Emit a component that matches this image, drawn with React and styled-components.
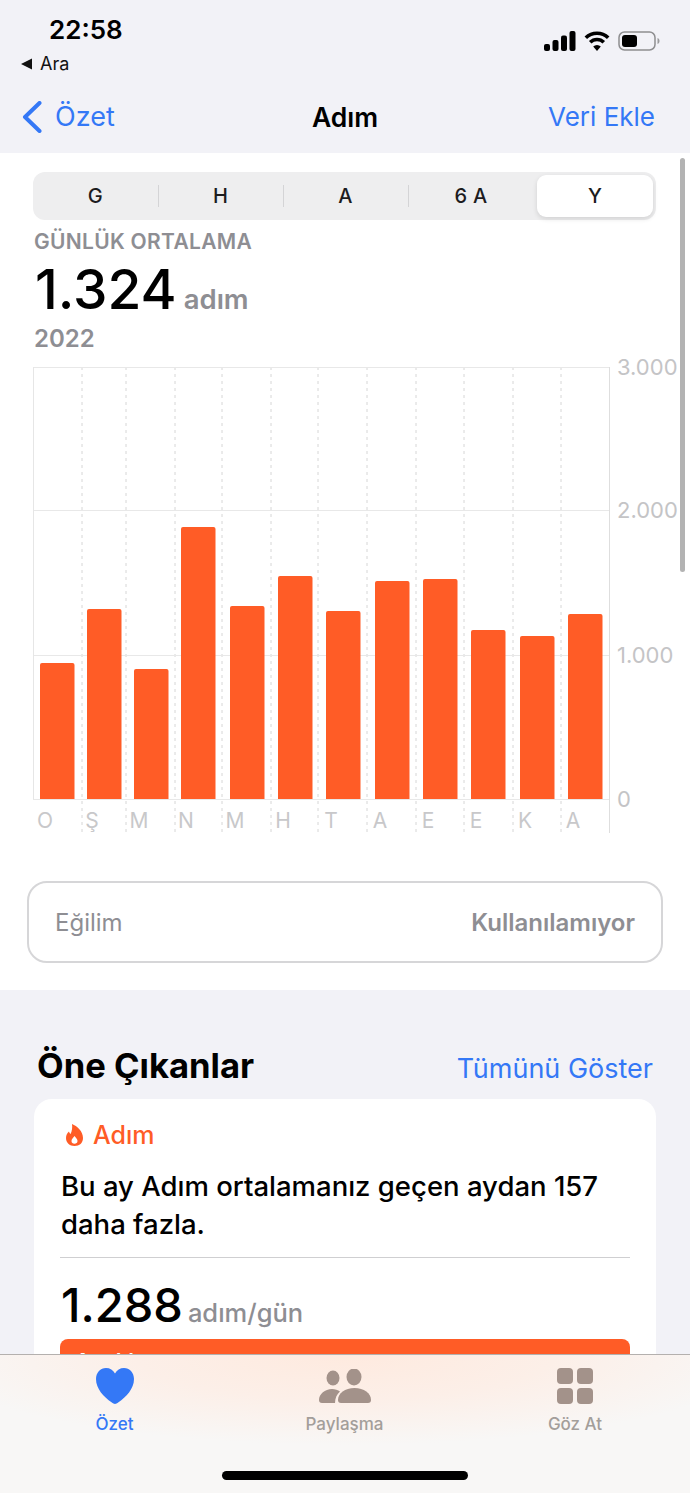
import React from 'react';
import styled, { createGlobalStyle } from 'styled-components';

const GlobalStyle = createGlobalStyle`
  html, body {
    margin: 0;
    padding: 0;
    background: #f2f2f7;
  }
  * {
    box-sizing: border-box;
  }
  body {
    font-family: Inter, "Noto Sans", "Liberation Sans", sans-serif;
  }
`;

const Screen = styled.div`
  position: relative;
  width: 690px;
  height: 1493px;
  overflow: hidden;
  background: #f2f2f7;
`;

const Header = styled.header`
  height: 153px;
  display: flex;
  flex-direction: column;
`;

const StatusBar = styled.div`
  height: 80px;
  display: flex;
  justify-content: space-between;
  align-items: flex-start;
  padding: 14px 30px 0 20px;
`;

const StatusLeft = styled.div`
  display: flex;
  flex-direction: column;
  gap: 9px;
`;

const Clock = styled.div`
  padding-left: 29px;
  font-size: 26px;
  line-height: 31px;
  font-weight: 600;
  color: #000;
`;

const BackApp = styled.div`
  display: flex;
  align-items: center;
  gap: 7px;
  font-size: 18px;
  line-height: 20px;
  color: #111;
`;

const StatusIcons = styled.div`
  display: flex;
  align-items: center;
  gap: 8px;
  margin-top: 17px;
`;

const NavBar = styled.nav`
  flex: 1;
  display: grid;
  grid-template-columns: 1fr auto 1fr;
  align-items: center;
  padding: 0 35px;
  font-size: 26px;
`;

const NavBack = styled.div`
  display: flex;
  align-items: center;
  gap: 13px;
  margin-left: -13px;
  font-size: 27px;
  color: #3478f6;
`;

const NavTitle = styled.div`
  font-size: 26.5px;
  font-weight: 600;
  color: #000;
`;

const NavAction = styled.div`
  justify-self: end;
  color: #3478f6;
`;

const ChartSection = styled.section`
  height: 837px;
  background: #fff;
  padding: 19px 34px 0 33px;
`;

const Segments = styled.div`
  height: 48px;
  display: grid;
  grid-template-columns: repeat(3, 125px) 126px 1fr;
  padding: 3px 3px 3px 0;
  border-radius: 12px;
  background: #eeeeef;
`;

const Segment = styled.div`
  position: relative;
  display: flex;
  align-items: center;
  justify-content: center;
  margin-left: ${(p) => (p.$active ? '3px' : '0')};
  font-size: 20px;
  font-weight: 500;
  letter-spacing: 0.3px;
  color: #1c1c1e;
  border-radius: 9px;
  background: ${(p) => (p.$active ? '#fff' : 'transparent')};
  box-shadow: ${(p) => (p.$active ? '0 2px 5px rgba(0,0,0,.12)' : 'none')};

  & + &::before {
    content: '';
    display: ${(p) => (p.$active ? 'none' : 'block')};
    position: absolute;
    left: 0;
    top: 10px;
    bottom: 10px;
    width: 1px;
    background: #d4d4d6;
  }
`;

const Eyebrow = styled.div`
  margin: 10px 0 0 1px;
  font-size: 21px;
  line-height: 24px;
  font-weight: 600;
  letter-spacing: 0.3px;
  color: #8e8e93;
`;

const Total = styled.div`
  display: flex;
  align-items: baseline;
  gap: 7px;
  height: 60px;
  margin: 5px 0 0 2px;
`;

const TotalValue = styled.span`
  font-size: 55px;
  line-height: 60px;
  font-weight: 500;
  color: #000;
`;

const TotalUnit = styled.span`
  font-size: 27.5px;
  font-weight: 600;
  color: #8e8e93;
`;

const Period = styled.div`
  margin: 5px 0 0 1px;
  font-size: 24px;
  line-height: 29px;
  font-weight: 600;
  color: #8e8e93;
`;

const Chart = styled.svg`
  display: block;
  width: 657px;
  height: 480px;
  margin-top: 14px;
  overflow: visible;
`;

const TrendBox = styled.div`
  height: 82px;
  margin: 34px -7px 0 -6px;
  padding: 0 26px;
  display: flex;
  align-items: center;
  justify-content: space-between;
  border: 2px solid #d6d6d8;
  border-radius: 20px;
  font-size: 24px;
`;

const TrendLabel = styled.span`
  color: #8e8e93;
`;

const TrendValue = styled.span`
  font-weight: 600;
  color: #8e8e93;
`;

const Highlights = styled.section`
  padding: 51px 34px 0 34px;
`;

const HighlightsHead = styled.div`
  display: flex;
  align-items: baseline;
  justify-content: space-between;
  padding: 0 3px;
`;

const HighlightsTitle = styled.h2`
  margin: 0;
  font-size: 34.6px;
  line-height: 48px;
  font-weight: 700;
  color: #000;
`;

const ShowAll = styled.span`
  font-size: 27px;
  color: #3478f6;
`;

const Card = styled.article`
  margin-top: 10px;
  padding: 18px 26px 0 26px;
  height: 400px;
  border-radius: 18px;
  background: #fff;
`;

const CardTag = styled.div`
  display: flex;
  align-items: center;
  gap: 10px;
  padding-left: 6px;
  font-size: 25px;
  line-height: 36px;
  font-weight: 500;
  color: #ff5c26;
`;

const CardText = styled.p`
  margin: 14px 0 0 1px;
  font-size: 27.5px;
  line-height: 38px;
  font-weight: 500;
  color: #000;
`;

const CardRule = styled.hr`
  margin: 14px 0 0;
  border: 0;
  height: 1px;
  background: #cfcfd1;
`;

const Stat = styled.div`
  display: flex;
  align-items: baseline;
  gap: 5px;
  margin: 18px 0 0 1px;
  height: 58px;
`;

const StatValue = styled.span`
  font-size: 47px;
  line-height: 58px;
  font-weight: 500;
  color: #000;
`;

const StatUnit = styled.span`
  font-size: 25.5px;
  font-weight: 500;
  color: #8e8e93;
`;

const MonthBar = styled.div`
  height: 60px;
  margin-top: 5px;
  padding: 9px 14px;
  border-radius: 8px 8px 0 0;
  background: #ff5c26;
  font-size: 25px;
  line-height: 30px;
  font-weight: 500;
  color: #fff;
`;

// altta kalan turuncu barın bulanık yansıması gradient ile
const TabBar = styled.div`
  position: absolute;
  left: 0;
  right: 0;
  bottom: 0;
  height: 139px;
  border-top: 1px solid #b4b0ae;
  background:
    radial-gradient(ellipse 420px 90px at 345px 0, #feeadf 0%, #fcefe8 50%, rgba(248, 247, 246, 0) 100%),
    #f8f7f6;
  display: grid;
  grid-template-columns: 229px 231px 230px;
`;

const Tab = styled.div`
  display: flex;
  flex-direction: column;
  align-items: center;
  padding-top: 13px;
  font-size: 17px;
  line-height: 20px;
  font-weight: 500;
  color: ${(p) => (p.$active ? '#3478f6' : '#a39e9a')};
`;

const TabIcon = styled.div`
  height: 36px;
  margin-bottom: 10px;
  display: flex;
  align-items: center;
`;

const HomeIndicator = styled.div`
  position: absolute;
  left: 222px;
  bottom: 13px;
  width: 246px;
  height: 9px;
  border-radius: 5px;
  background: #000;
`;

const ScrollThumb = styled.div`
  position: absolute;
  left: 680px;
  top: 158px;
  width: 5px;
  height: 414px;
  border-radius: 3px;
  background: #b3b3b3;
`;

const months = ['O', 'Ş', 'M', 'N', 'M', 'H', 'T', 'A', 'E', 'E', 'K', 'A'];
// x konumları ve bar üstleri ekran görüntüsünden
const bars = [
  [40, 663], [87, 609], [134, 669], [181, 527], [230, 606], [278, 576],
  [326, 611], [375, 581], [423, 579], [471, 630], [520, 636], [568, 614],
];
const dividers = [82, 126, 175, 222, 271, 318, 367, 416, 464, 513, 561];
const gridLines = [
  { y: 367, label: '3.000' },
  { y: 510, label: '2.000' },
  { y: 655, label: '1.000' },
  { y: 799, label: '0' },
];

// chart svg'si sayfada x=33, y=367 noktasından başlıyor
const StepsChart = () => (
  <Chart viewBox="33 367 657 480">
    {dividers.map((x) => (
      <line key={x} x1={x} x2={x} y1={367} y2={833} stroke="#d6d6d6" strokeWidth="1" strokeDasharray="3 4" />
    ))}
    {gridLines.map((g) => (
      <line key={g.y} x1={33} x2={609} y1={g.y + 0.5} y2={g.y + 0.5} stroke="#e8e8e8" strokeWidth="1" />
    ))}
    <line x1={33.5} x2={33.5} y1={367} y2={799} stroke="#e6e6e6" strokeWidth="1" />
    <line x1={609.5} x2={609.5} y1={367} y2={833} stroke="#dedede" strokeWidth="1" />
    {bars.map(([x, top]) => (
      <path
        key={x}
        d={`M${x} 799V${top + 2}a2 2 0 0 1 2-2h30.500a2 2 0 0 1 2 2V799z`}
        fill="#ff5c26"
      />
    ))}
    {gridLines.map((g) => (
      <text
        key={g.label}
        x={617}
        y={g.y + 8}
        fontFamily="Inter, sans-serif"
        fontSize="22"
        fill="#c4c4c6"
      >
        {g.label}
      </text>
    ))}
    {months.map((m, i) => (
      <text
        key={i}
        x={bars[i][0] + 5}
        y={828}
        textAnchor="middle"
        fontFamily="Inter, sans-serif"
        fontSize="21"
        fill="#c8c8ca"
      >
        {m}
      </text>
    ))}
  </Chart>
);

const BackTriangle = () => (
  <svg width="13" height="12" viewBox="0 0 13 12">
    <path d="M1 6 12 .5v11z" fill="#111" />
  </svg>
);

const SignalIcon = () => (
  <svg width="32" height="20" viewBox="0 0 32 20" fill="#000">
    <rect x="0" y="13" width="6" height="7" rx="2" />
    <rect x="8.500" y="9" width="6" height="11" rx="2" />
    <rect x="17" y="4.500" width="6" height="15.500" rx="2" />
    <rect x="25.500" y="0" width="6" height="20" rx="2" />
  </svg>
);

const WifiIcon = () => (
  <svg width="26" height="20" viewBox="0 0 26 20" fill="none" stroke="#000" strokeWidth="3.600">
    <path d="M1.800 6.800a16 16 0 0 1 22.400 0" />
    <path d="M6.200 11.300a9.600 9.600 0 0 1 13.600 0" />
    <path d="M13 20l-3.800-4.600a5.500 5.500 0 0 1 7.600 0z" fill="#000" stroke="none" />
  </svg>
);

const BatteryIcon = () => (
  <svg width="42" height="20" viewBox="0 0 42 20">
    <rect x="1" y="1" width="36" height="18" rx="5.500" fill="none" stroke="#8e8e90" strokeWidth="1.500" />
    <rect x="4" y="4" width="15" height="12" rx="3" fill="#000" />
    <path d="M39.500 7c1.500.6 2 1.600 2 3s-.5 2.400-2 3z" fill="#9a9a9c" />
  </svg>
);

const Chevron = () => (
  <svg width="20" height="32" viewBox="0 0 20 32" fill="none" stroke="#3478f6" strokeWidth="4" strokeLinecap="round" strokeLinejoin="round">
    <path d="M17.500 2 3 16l14.500 14" />
  </svg>
);

const FlameIcon = () => (
  <svg width="17" height="22" viewBox="0 0 17 22">
    <path
      fillRule="evenodd"
      fill="#ff5c26"
      d="M6 0c5 2 11 7 11 14 0 5-3.500 8-8.500 8S0 18.500 0 14c0-3 1.200-5 3-6.500.3 1.300.8 2 1.600 2.500C6 7 6.500 3.500 6 0zM8.500 12c-1.800 2-3 3.500-3 5 0 1.700 1.300 2.800 3 2.800s3-1.100 3-2.800c0-1.500-1.200-3-3-5z"
    />
  </svg>
);

const HeartIcon = () => (
  <svg width="38" height="36" viewBox="0 0 38 36">
    <path
      fill="#3478f6"
      d="M19 36c-1 0-2-.6-3.500-1.700C8 29 0 21 0 11 0 4.500 4.500 0 10 0c4 0 7.200 2 9 5.500C20.800 2 24 0 28 0c5.500 0 10 4.500 10 11 0 10-8 18-15.500 23.300C21 35.400 20 36 19 36z"
    />
  </svg>
);

const PeopleIcon = () => (
  <svg width="52" height="34" viewBox="0 0 52 34" fill="#a3928a">
    <ellipse cx="14" cy="9" rx="6.500" ry="7.500" />
    <ellipse cx="35" cy="8" rx="7.500" ry="8.500" />
    <path d="M0 31c0-6 6-11 13-11 3 0 6 1 8 2.500-3 2.500-5 6.500-5 11.500H3c-2 0-3-1-3-3z" />
    <path d="M19 31c0-7 7-12 16.500-12S52 24 52 31c0 2-1 3-3 3H22c-2 0-3-1-3-3z" />
  </svg>
);

const GridIcon = () => (
  <svg width="36" height="36" viewBox="0 0 36 36" fill="#a3928a">
    <rect x="0" y="0" width="16" height="16" rx="4" />
    <rect x="20" y="0" width="16" height="16" rx="4" />
    <rect x="0" y="20" width="16" height="16" rx="4" />
    <rect x="20" y="20" width="16" height="16" rx="4" />
  </svg>
);

const ranges = ['G', 'H', 'A', '6 A', 'Y'];

const App = () => (
  <Screen>
    <GlobalStyle />
    <Header>
      <StatusBar>
        <StatusLeft>
          <Clock>22:58</Clock>
          <BackApp>
            <BackTriangle /> Ara
          </BackApp>
        </StatusLeft>
        <StatusIcons>
          <SignalIcon />
          <WifiIcon />
          <BatteryIcon />
        </StatusIcons>
      </StatusBar>
      <NavBar>
        <NavBack>
          <Chevron />
          Özet
        </NavBack>
        <NavTitle>Adım</NavTitle>
        <NavAction>Veri Ekle</NavAction>
      </NavBar>
    </Header>

    <ChartSection>
      <Segments>
        {ranges.map((r) => (
          <Segment key={r} $active={r === 'Y'}>{r}</Segment>
        ))}
      </Segments>
      <Eyebrow>GÜNLÜK ORTALAMA</Eyebrow>
      <Total>
        <TotalValue>1.324</TotalValue>
        <TotalUnit>adım</TotalUnit>
      </Total>
      <Period>2022</Period>
      <StepsChart />
      <TrendBox>
        <TrendLabel>Eğilim</TrendLabel>
        <TrendValue>Kullanılamıyor</TrendValue>
      </TrendBox>
    </ChartSection>

    <Highlights>
      <HighlightsHead>
        <HighlightsTitle>Öne Çıkanlar</HighlightsTitle>
        <ShowAll>Tümünü Göster</ShowAll>
      </HighlightsHead>
      <Card>
        <CardTag>
          <FlameIcon />
          Adım
        </CardTag>
        <CardText>
          Bu ay Adım ortalamanız geçen aydan 157
          <br />
          daha fazla.
        </CardText>
        <CardRule />
        <Stat>
          <StatValue>1.288</StatValue>
          <StatUnit>adım/gün</StatUnit>
        </Stat>
        <MonthBar>Aralık</MonthBar>
      </Card>
    </Highlights>

    <ScrollThumb />

    <TabBar>
      <Tab $active>
        <TabIcon><HeartIcon /></TabIcon>
        Özet
      </Tab>
      <Tab>
        <TabIcon><PeopleIcon /></TabIcon>
        Paylaşma
      </Tab>
      <Tab>
        <TabIcon><GridIcon /></TabIcon>
        Göz At
      </Tab>
      <HomeIndicator />
    </TabBar>
  </Screen>
);

export default App;
